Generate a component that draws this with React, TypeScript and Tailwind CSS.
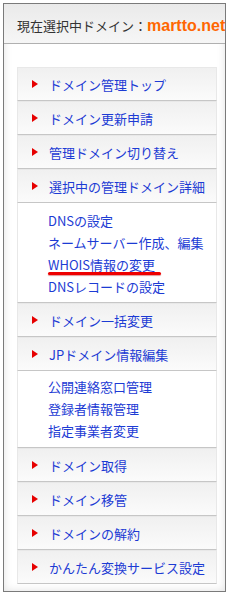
import React from "react";

const font = { fontFamily: '"Noto Sans CJK JP", "Noto Sans", sans-serif' };

function MenuItem({ label }: { label: string }) {
  return (
    <a
      href="#"
      className="flex h-[34px] items-center border border-[#e8e8e8] border-b-[#c6c6c6] bg-gradient-to-b from-[#f0f0f0] to-[#fbfbfb] pl-[14px] text-[13px] text-[#1c3bd4]"
    >
      <span className="h-0 w-0 border-y-[4px] border-l-[6px] border-y-transparent border-l-[#e60000]" />
      <span className="ml-[11px] leading-none">{label}</span>
    </a>
  );
}

function SubList({ links, className }: { links: { label: string; marked?: boolean }[]; className: string }) {
  return (
    <ul className={`border-x border-b border-[#e8e8e8] border-b-[#c6c6c6] bg-white pl-[30px] ${className}`}>
      {links.map((l) => (
        <li key={l.label} className="relative h-[22px] text-[13px] leading-[22px] text-[#1c3bd4]">
          <a href="#">{l.label}</a>
          {l.marked && (
            <div className="absolute left-0 top-[18px] h-[3px] w-[113px] rounded-full bg-[#ee0000] shadow-[0_1px_1px_rgba(180,0,0,0.4)]" />
          )}
        </li>
      ))}
    </ul>
  );
}

export default function App() {
  return (
    <div className="h-[596px] w-[227px] bg-white pl-[3px] pt-[3px]" style={font}>
      <div className="h-[589px] w-[223px] overflow-hidden border border-[#7a7a7a] bg-white shadow-[inset_0_0_8px_rgba(0,0,0,0.12)]">
        {/* header */}
        <div className="flex h-[40px] items-center overflow-hidden border-b border-[#b0b0b0] bg-gradient-to-b from-[#eaeaea] to-[#f6f6f6] pl-[13px] pt-[5px] text-[13px] whitespace-nowrap">
          <span className="text-[#333]">現在選択中ドメイン：</span>
          <span className="font-bold text-[#ff6600]" style={{ fontFamily: '"Liberation Sans", sans-serif', fontSize: 16 }}>
            martto.net
          </span>
        </div>

        {/* menu */}
        <div className="ml-[13px] mt-[23px] w-[200px]">
          <MenuItem label="ドメイン管理トップ" />
          <MenuItem label="ドメイン更新申請" />
          <MenuItem label="管理ドメイン切り替え" />
          <MenuItem label="選択中の管理ドメイン詳細" />
          <SubList
            className="pt-[7px] pb-[4px]"
            links={[
              { label: "DNSの設定" },
              { label: "ネームサーバー作成、編集" },
              { label: "WHOIS情報の変更", marked: true },
              { label: "DNSレコードの設定" },
            ]}
          />
          <MenuItem label="ドメイン一括変更" />
          <MenuItem label="JPドメイン情報編集" />
          <SubList
            className="pt-[5px] pb-[5px]"
            links={[{ label: "公開連絡窓口管理" }, { label: "登録者情報管理" }, { label: "指定事業者変更" }]}
          />
          <MenuItem label="ドメイン取得" />
          <MenuItem label="ドメイン移管" />
          <MenuItem label="ドメインの解約" />
          <MenuItem label="かんたん変換サービス設定" />
        </div>
      </div>
    </div>
  );
}
